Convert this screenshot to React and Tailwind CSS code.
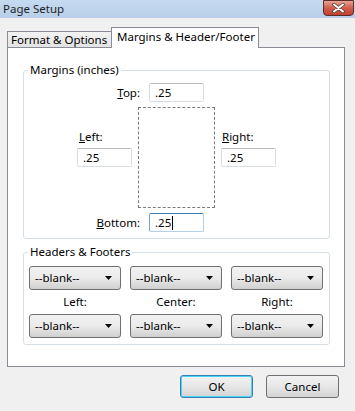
import React from 'react';

const font = { fontFamily: '"Noto Sans", "Liberation Sans", sans-serif' };

const TextBox = ({ value, focused }) => (
  <div
    className={
      'w-[55px] h-[19px] flex items-center pl-[5px] bg-white rounded-[2px] border text-[11.5px] leading-[16px] text-black ' +
      (focused
        ? 'border-[#b5cfe7] border-t-[#3d7bad] border-l-[#6fa1c9]'
        : 'border-[#dadde3] border-t-[#b9bcc3]')
    }
  >
    {value}
    {focused && <span className="w-px h-[14px] bg-black ml-[1px]" />}
  </div>
);

const Combo = () => (
  <div className="h-[24px] flex items-center justify-between pl-[5px] pr-[8px] rounded-[3px] border border-[#707070] bg-gradient-to-b from-[#f2f2f2] via-[#ebebeb] to-[#d0d0d0] text-[11.5px] leading-[16px] text-black whitespace-nowrap">
    <span>--blank--</span>
    <svg width="7" height="4" viewBox="0 0 7 4">
      <path d="M0 0h7L3.5 4z" fill="#000" />
    </svg>
  </div>
);

const Button = ({ label, primary }) => (
  <div
    className={
      'w-[73px] h-[23px] flex items-center justify-center rounded-[3px] border text-[11.5px] leading-[16px] text-black bg-gradient-to-b from-[#f2f2f2] via-[#e7e7e7] to-[#d3d3d3] ' +
      (primary ? 'border-[#3c7fb1] shadow-[inset_0_0_0_1px_#48d4f7]' : 'border-[#707070]')
    }
  >
    {label}
  </div>
);

export default function App() {
  return (
    <div className="w-[355px] h-[411px] bg-[#f0f0f0] flex flex-col text-black overflow-hidden whitespace-nowrap" style={font}>
      {/* title bar */}
      <div className="h-[18px] flex items-start justify-between bg-gradient-to-b from-[#c6daf1] to-[#b8cfe9]">
        <span className="pl-[3px] pt-[1px] text-[11.5px] leading-[16px] text-[#1e1e1e]">Page Setup</span>
        <div className="mr-[1px] w-[31px] h-[16px] rounded-b-[4px] border border-[#5e2a2a] bg-gradient-to-b from-[#e8a394] via-[#cf5d4c] to-[#c0412f] flex items-center justify-center">
          <svg width="13" height="10" viewBox="0 0 13 10">
            <path d="M2 1.5L11 8.5M11 1.5L2 8.5" stroke="#4a3a3a" strokeWidth="3.4" strokeLinecap="round" />
            <path d="M2 1.5L11 8.5M11 1.5L2 8.5" stroke="#fff" strokeWidth="2" strokeLinecap="round" />
          </svg>
        </div>
      </div>

      {/* tabs */}
      <div className="flex items-end pl-[7px] pt-[9px]">
        <div className="h-[16px] w-[104px] flex items-center pl-[3px] border-l border-t border-[#898c95] bg-gradient-to-b from-[#f3f3f3] to-[#e3e3e3] text-[11.5px] leading-[16px]">
          Format &amp; Options
        </div>
        <div className="relative z-10 -mb-px h-[21px] w-[148px] flex items-center pl-[5px] pb-[2px] border border-b-0 border-[#898c95] bg-white text-[11.5px] leading-[16px]">
          Margins &amp; Header/Footer
        </div>
      </div>

      {/* panel */}
      <div className="ml-[7px] w-[338px] h-[320px] border border-[#898c95] bg-white">
        <fieldset className="mt-[14px] ml-[15px] w-[307px] border border-[#d5dfe5] rounded-[3px] pb-[6px]">
          <legend className="ml-[4px] px-[2px] text-[11.5px] leading-[16px]">Margins (inches)</legend>
          <div className="w-[199px] mx-auto pt-[5px] text-[11.5px] leading-[16px]">
            <div className="flex items-center h-[19px]">
              <span className="w-[72px] text-right pr-[9px]">
                <span className="underline">T</span>op:
              </span>
              <TextBox value=".25" />
            </div>
            <div className="flex mt-[5px] gap-[6px]">
              <div className="w-[55px] pt-[22px] flex flex-col">
                <span className="pl-[2px]">
                  <span className="underline">L</span>eft:
                </span>
                <div className="mt-[3px]">
                  <TextBox value=".25" />
                </div>
              </div>
              <div className="w-[78px] h-[101px] border border-dashed border-[#7a7a7a]" />
              <div className="w-[55px] pt-[22px] flex flex-col">
                <span className="pl-[1px]">
                  <span className="underline">R</span>ight:
                </span>
                <div className="mt-[3px]">
                  <TextBox value=".25" />
                </div>
              </div>
            </div>
            <div className="flex items-center h-[19px] mt-[5px]">
              <span className="w-[72px] text-right pr-[9px]">
                <span className="underline">B</span>ottom:
              </span>
              <TextBox value=".25" focused />
            </div>
          </div>
        </fieldset>

        <fieldset className="mt-[5px] ml-[15px] w-[307px] border border-[#d5dfe5] rounded-[3px] pl-[5px] pr-[6px] pt-[6px] pb-[6px]">
          <legend className="ml-[-1px] px-[2px] text-[11.5px] leading-[16px]">Headers &amp; Footers</legend>
          <div className="grid grid-cols-3 gap-x-[9px] text-[11.5px] leading-[16px]">
            <Combo />
            <Combo />
            <Combo />
            <div className="h-[24px] flex items-center justify-center">Left:</div>
            <div className="h-[24px] flex items-center justify-center">Center:</div>
            <div className="h-[24px] flex items-center justify-center">Right:</div>
            <Combo />
            <Combo />
            <Combo />
          </div>
        </fieldset>
      </div>

      {/* buttons */}
      <div className="flex justify-end gap-[13px] pr-[16px] mt-[8px]">
        <Button label="OK" primary />
        <Button label="Cancel" />
      </div>
    </div>
  );
}
